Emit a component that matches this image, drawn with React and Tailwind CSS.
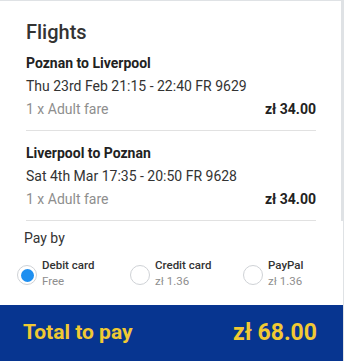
import React from 'react';

const flights = [
  { route: 'Poznan to Liverpool', time: 'Thu 23rd Feb 21:15 - 22:40 FR 9629', price: 'zł 34.00' },
  { route: 'Liverpool to Poznan', time: 'Sat 4th Mar 17:35 - 20:50 FR 9628', price: 'zł 34.00' },
];

const methods = [
  { name: 'Debit card', fee: 'Free', selected: true },
  { name: 'Credit card', fee: 'zł 1.36' },
  { name: 'PayPal', fee: 'zł 1.36' },
];

const Radio = ({ selected }) => (
  <span className="w-5 h-5 rounded-full border border-[#cfd2d6] bg-white flex items-center justify-center shrink-0">
    {selected && <span className="w-[13px] h-[13px] rounded-full bg-[#1e8ff0]" />}
  </span>
);

const App = () => {
  return (
    <div
      className="w-[344px] h-[361px] bg-[#dfe2e5] pt-px overflow-hidden text-[#333]"
      style={{ fontFamily: 'Roboto, "Liberation Sans", sans-serif' }}
    >
      {/* Flights */}
      <section className="w-[341px] bg-white pl-[26px] pr-[25px] pt-[19px]">
        <h2 className="text-[20px] leading-6 font-medium text-[#333]">Flights</h2>
        {flights.map((f, i) => (
          <div
            key={f.route}
            className={`border-b border-[#e1e1e1] pb-[9px] ${i === 0 ? 'pt-2' : 'pt-[11px]'}`}
          >
            <div className="text-[14px] leading-[23px] font-bold text-[#222]">{f.route}</div>
            <div className="text-[14px] leading-[23px]">{f.time}</div>
            <div className="flex justify-between text-[14px] leading-[23px]">
              <span className="text-[#8e8e8e]">1 x Adult fare</span>
              <span className="font-bold text-[#222]">{f.price}</span>
            </div>
          </div>
        ))}
      </section>

      {/* Payment */}
      <section className="w-[343px] bg-white pt-[7px] h-[84px] overflow-hidden">
        <div className="pl-6 text-[14px] leading-5">Pay by</div>
        <div className="flex pl-[17px] mt-[9px]">
          {methods.map((m) => (
            <div key={m.name} className="w-[113px] shrink-0 flex items-start">
              <div className="mt-[8px]">
                <Radio selected={m.selected} />
              </div>
              <div className="ml-[5px] text-[11.5px] leading-4">
                <div className="font-medium text-[#333]">{m.name}</div>
                <div className="text-[#8e8e8e]">{m.fee}</div>
              </div>
            </div>
          ))}
        </div>
      </section>

      {/* Total */}
      <footer className="w-[343px] h-[56px] bg-[#073590] flex items-center justify-between pl-[23px] pr-[26px] text-[#f1c933] font-bold">
        <span className="text-[21px]">Total to pay</span>
        <span className="text-[23px]">zł 68.00</span>
      </footer>
    </div>
  );
};

export default App;
